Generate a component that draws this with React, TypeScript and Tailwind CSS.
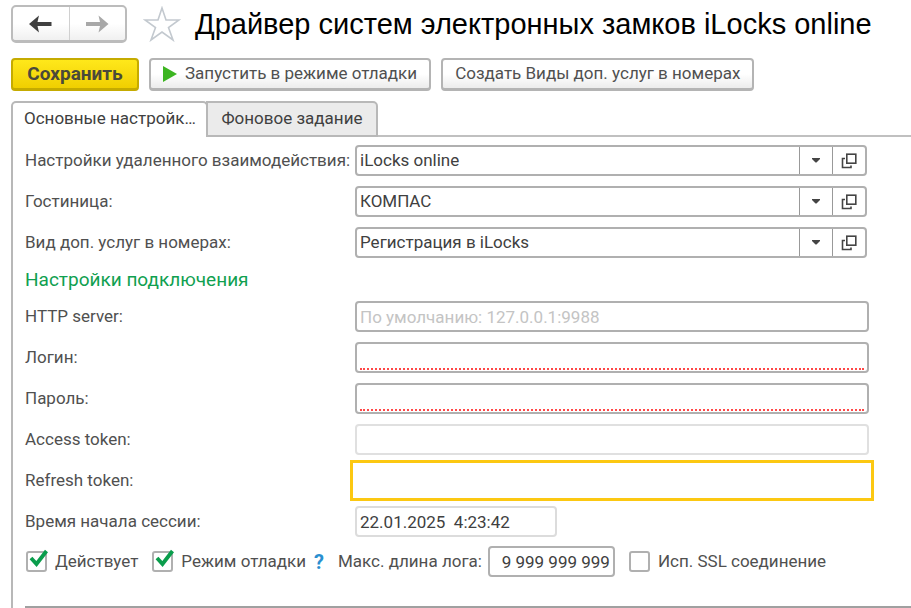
import React, { useState } from 'react';

type LookupProps = { id: string; label: string; options: string[] };

const LABEL = 'whitespace-nowrap text-[17px] leading-[31px] text-[#505050]';
const FIELD = 'h-[31px] w-full min-w-0 rounded-[4px] border-2 border-[#b0b0b0] bg-white px-[3px] text-[17px] text-[#404040] outline-none';
const BUTTON = 'flex h-[33px] items-center whitespace-nowrap rounded-[4px] border-2 border-b-3 border-[#b4b4b4] bg-linear-to-b from-white from-50% to-[#ececec] text-[17px] text-[#505050]';

function OpenIcon() {
    return (
        <svg width="16" height="16" viewBox="0 0 16 16" fill="none" stroke="#444" strokeWidth="1.6">
            <rect x="5.800" y="1.200" width="9" height="9" />
            <path d="M4 5.500H1.500V14.500H10V12.500" />
        </svg>
    );
}

function Lookup({ id, label, options }: LookupProps) {
    return (
        <>
            <label htmlFor={id} className={LABEL}>{label}</label>
            <div className="mr-[2px] flex h-[31px] overflow-hidden rounded-[4px] border-2 border-[#b0b0b0] bg-white">
                <div className="relative min-w-0 flex-1">
                    <select id={id} className="h-full w-full appearance-none bg-transparent pr-9 pl-[3px] text-[17px] text-[#404040] outline-none">
                        {options.map((o) => <option key={o}>{o}</option>)}
                    </select>
                    <span className="pointer-events-none absolute inset-y-0 right-0 flex w-[33px] items-center justify-center border-l border-[#999]">
                        <svg width="8" height="5" viewBox="0 0 8 5"><path d="M0 0H8V1L4.500 4.500H3.500L0 1Z" fill="#444" /></svg>
                    </span>
                </div>
                <button type="button" aria-label="Открыть" className="flex w-[33px] items-center justify-center border-l border-[#999]">
                    <OpenIcon />
                </button>
            </div>
        </>
    );
}

function RequiredField({ id, label, type }: { id: string; label: string; type: string }) {
    return (
        <>
            <label htmlFor={id} className={LABEL}>{label}</label>
            <div className="flex h-[31px] rounded-[4px] border-2 border-[#b0b0b0] bg-white px-[3px] pb-px">
                <input id={id} type={type} className="w-full min-w-0 border-b-2 border-dotted border-[#ff4848] text-[17px] outline-none" />
            </div>
        </>
    );
}

function Check({ id, label, initial }: { id: string; label: string; initial: boolean }) {
    const [checked, setChecked] = useState(initial);
    return (
        <div className="flex items-center gap-2">
            <span className="relative flex">
                <input
                    id={id}
                    type="checkbox"
                    checked={checked}
                    onChange={(e) => setChecked(e.target.checked)}
                    className="size-[21px] appearance-none rounded-[3px] border-2 border-[#b0b0b0] bg-white"
                />
                {checked && (
                    <svg className="pointer-events-none absolute -top-0.5 left-0" width="23" height="20" viewBox="0 0 23 20" fill="none" stroke="#0a9d4c" strokeWidth="3.8">
                        <path d="M5 9L10.500 15L20.500 2" />
                    </svg>
                )}
            </span>
            <label htmlFor={id} className={LABEL}>{label}</label>
        </div>
    );
}

export default function App() {
    return (
        <div className="min-h-screen bg-white pt-[5px] font-['Roboto','Liberation_Sans',sans-serif]">
            <header className="flex items-center pl-[11px]">
                <div className="flex h-[38px] w-[116px] shrink-0 rounded-[5px] border-2 border-b-3 border-[#bcbcbc] bg-linear-to-b from-white from-50% to-[#f0f0f0]">
                    <button type="button" aria-label="Назад" className="flex flex-1 items-center justify-center border-r border-[#d0d0d0]">
                        <svg width="23" height="18" viewBox="0 0 23 18" fill="#404040"><path d="M0 9L10 0.500L8.500 7H22.500V11H8.500L10 17.500Z" /></svg>
                    </button>
                    <button type="button" aria-label="Вперед" className="flex flex-1 items-center justify-center">
                        <svg width="23" height="18" viewBox="0 0 23 18" fill="#a8a8a8"><path d="M22.500 9L12.500 0.500L14 7H0V11H14L12.500 17.500Z" /></svg>
                    </button>
                </div>
                <button type="button" aria-label="В избранное" className="ml-4 shrink-0">
                    <svg width="38" height="36" viewBox="0 0 38 36" fill="none" stroke="#c3c9cf" strokeWidth="1.6">
                        <path d="M19 2L23 14H36L25.500 21.500L30 34L19 26L8 34L12.500 21.500L2 14H15Z" />
                    </svg>
                </button>
                <h1 className="ml-[14px] font-['Liberation_Sans',sans-serif] text-[29px] leading-[38px] whitespace-nowrap text-black">
                    Драйвер систем электронных замков iLocks online
                </h1>
            </header>

            <div className="mt-[15px] flex gap-[10px] pl-[11px]">
                <button type="button" className="h-[33px] w-[128px] rounded-[4px] border-2 border-b-3 border-[#c5ab00] bg-linear-to-b from-[#ffe81a] to-[#f0cf00] text-[19px] leading-[28px] font-bold text-[#4a4a3a]">
                    Сохранить
                </button>
                <button type="button" className={`${BUTTON} gap-2 px-3`}>
                    <svg width="14" height="16" viewBox="0 0 14 16" fill="#3cb521"><path d="M0 0L14 8L0 16Z" /></svg>
                    Запустить в режиме отладки
                </button>
                <button type="button" className={`${BUTTON} px-3`}>Создать Виды доп. услуг в номерах</button>
            </div>

            <div className="mt-[10px] flex pl-[11px]">
                <button type="button" className="h-9 w-[197px] rounded-t-[5px] border-2 border-b-0 border-[#b8b8b8] bg-white pb-0.5 pl-[11px] text-left text-[17px] text-[#404040]">
                    Основные настройк…
                </button>
                <button type="button" className="-ml-0.5 h-9 w-[172px] rounded-tr-[5px] border-2 border-[#b8b8b8] bg-[#ebebeb] text-[17px] text-[#404040]">
                    Фоновое задание
                </button>
                <div className="flex-1 border-b-2 border-[#c0c0c0]" />
            </div>

            <main className="ml-[11px] border-l-2 border-[#b8b8b8] pl-3">
                <form className="pt-2" onSubmit={(e) => e.preventDefault()}>
                    <div className="grid grid-cols-[330px_minmax(0,1fr)] gap-y-[10px] pr-[42px]">
                        <Lookup id="remote" label="Настройки удаленного взаимодействия:" options={['iLocks online']} />
                        <Lookup id="hotel" label="Гостиница:" options={['КОМПАС']} />
                        <Lookup id="service" label="Вид доп. услуг в номерах:" options={['Регистрация в iLocks']} />
                    </div>

                    <h2 className="my-2 text-[19px] leading-[27px] text-[#10a050]">Настройки подключения</h2>

                    <div className="grid grid-cols-[330px_minmax(0,1fr)] gap-y-[10px] pr-[42px]">
                        <label htmlFor="server" className={LABEL}>HTTP server:</label>
                        <input id="server" type="text" placeholder="По умолчанию: 127.0.0.1:9988" className={`${FIELD} placeholder:text-[#c4c4c4]`} />
                        <RequiredField id="login" label="Логин:" type="text" />
                        <RequiredField id="password" label="Пароль:" type="password" />
                        <label htmlFor="access" className={LABEL}>Access token:</label>
                        <input id="access" type="text" readOnly className="h-[31px] w-full min-w-0 rounded-[4px] border-2 border-[#e0e0e0] bg-white px-[3px] text-[17px] outline-none" />
                        <label htmlFor="refresh" className={LABEL}>Refresh token:</label>
                        <input id="refresh" type="text" className="h-[31px] w-full min-w-0 bg-white px-[5px] text-[17px] text-[#404040] outline-3 outline-offset-2 outline-[#fcc812]" />
                        <label htmlFor="started" className={LABEL}>Время начала сессии:</label>
                        <input id="started" type="text" readOnly value="22.01.2025  4:23:42" className="h-[31px] w-[202px] rounded-[4px] border-2 border-[#dcdcdc] bg-white px-[3px] text-[17px] text-[#404040] outline-none" />
                    </div>

                    <div className="mt-[9px] flex items-center pl-px">
                        <Check id="active" label="Действует" initial={true} />
                        <div className="ml-[14px] flex items-center gap-2">
                            <Check id="debug" label="Режим отладки" initial={true} />
                            <button type="button" aria-label="Справка" className="text-[20px] font-bold text-[#2a8fd0]">?</button>
                        </div>
                        <label htmlFor="maxlog" className={`${LABEL} mr-[6px] ml-[14px]`}>Макс. длина лога:</label>
                        <input id="maxlog" type="text" defaultValue="9 999 999 999" className="h-[31px] w-[127px] rounded-[4px] border-2 border-[#b0b0b0] bg-white px-[3px] text-right text-[17px] text-[#404040] outline-none" />
                        <div className="ml-[14px]">
                            <Check id="ssl" label="Исп. SSL соединение" initial={false} />
                        </div>
                    </div>
                </form>
                <hr className="mt-[29px] border-t-2 border-[#a0a0a0]" />
            </main>
        </div>
    );
}
